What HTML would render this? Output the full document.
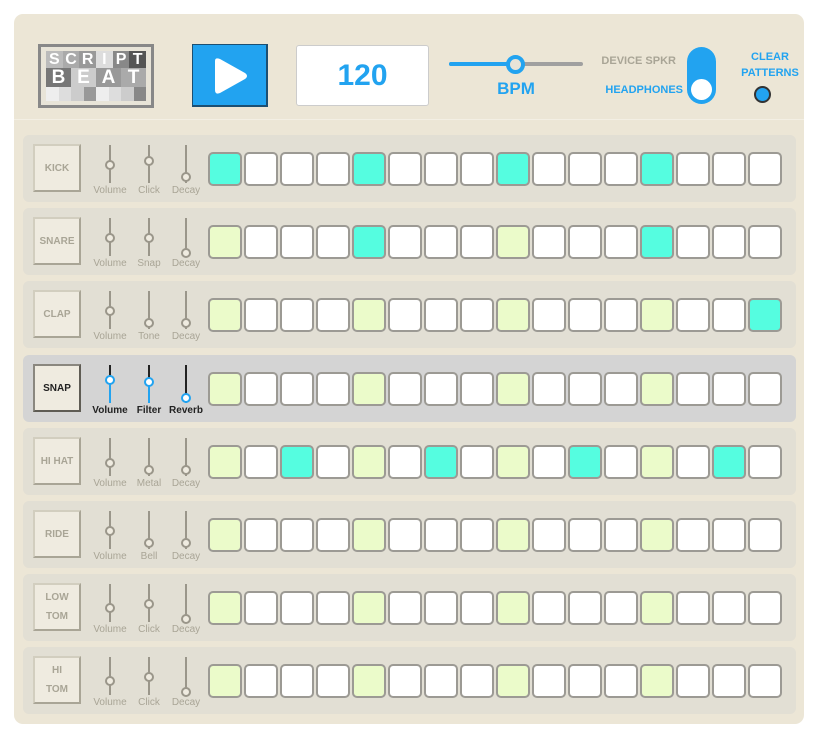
<!DOCTYPE html>
<html><head><meta charset="utf-8"><style>
*{box-sizing:border-box;margin:0;padding:0}
body{width:821px;height:734px;background:#fff;font-family:"Liberation Sans",sans-serif;position:relative;overflow:hidden}
.panel{position:absolute;left:14px;top:14px;width:790px;height:710px;background:#ece6d6;border-radius:9px}
.sep{position:absolute;left:14px;top:119px;width:790px;height:1px;background:#f3efe4}
.row{position:absolute;left:23px;width:773px;height:67px;background:#e2dfd4;border-radius:6px}
.row.act{background:#d4d4d4}
.btn{position:absolute;left:10px;top:9px;width:48px;height:48px;background:#efebe0;border:2px solid #d2cebf;border-right-color:#a9a596;border-bottom-color:#a9a596;color:#a9a596;font-weight:bold;font-size:10px;display:flex;align-items:center;justify-content:center;text-align:center;line-height:19px}
.act .btn{border:2px solid #5f5c54;border-top-color:#8a877f;border-left-color:#8a877f;color:#222}
.sl{position:absolute;top:10px;width:2px;height:38px;background:#9a968a}
.kn{position:absolute;left:-4px;width:10px;height:10px;border-radius:50%;border:2px solid #9a968a;background:#efebe0}
.act .sl{background:#222}
.act .kn{border-color:#22a3f0;background:#fff}
.act .fill{position:absolute;left:0;width:2px;background:#22a3f0;bottom:0}
.lb{position:absolute;top:40px;width:50px;margin-left:-24px;text-align:center;font-size:10px;color:#a9a596}
.act .lb{color:#222;font-weight:bold}
.pad{position:absolute;top:17px;width:34px;height:34px;background:#fff;border:2px solid #9c9a94;border-radius:5px}
.g{background:#ebfbca}.t{background:#55fde0}
</style></head><body>
<div class="panel"></div><div class="sep"></div>

<div style="position:absolute;left:38px;top:44px;width:116px;height:64px;background:#888;padding:3px">
<div style="width:110px;height:58px;background:#e8e4d8;padding:4px 5px;position:relative">
<div style="display:flex;height:17px;font-weight:bold;font-size:16px;color:#fff;line-height:17px;text-align:center">
<div style="flex:1;background:#bbb">S</div><div style="flex:1;background:#aaa">C</div><div style="flex:1;background:#999">R</div><div style="flex:1;background:#ddd">I</div><div style="flex:1;background:#888">P</div><div style="flex:1;background:#555">T</div></div>
<div style="display:flex;height:19px;font-weight:bold;font-size:19px;color:#fff;line-height:19px;text-align:center">
<div style="flex:1;background:#777">B</div><div style="flex:1;background:#ccc">E</div><div style="flex:1;background:#999">A</div><div style="flex:1;background:#aaa">T</div></div>
<div style="display:flex;height:14px"><div style="flex:1;background:#eee"></div><div style="flex:1;background:#ddd"></div><div style="flex:1;background:#ccc"></div><div style="flex:1;background:#999"></div><div style="flex:1;background:#eee"></div><div style="flex:1;background:#ddd"></div><div style="flex:1;background:#ccc"></div><div style="flex:1;background:#888"></div></div>
</div></div>

<div style="position:absolute;left:192px;top:44px;width:76px;height:63px;background:#22a3f0;border:1px solid #1c4f72;border-bottom-width:2px;border-right-width:2px">
<svg width="76" height="63" style="position:absolute;left:0;top:0"><path d="M22 16 L22 45 Q22 50 27 48 L52 34 Q56 31 52 28 L27 14 Q22 12 22 16Z" fill="#fff"/></svg></div>

<div style="position:absolute;left:296px;top:45px;width:133px;height:61px;background:#fff;border:1px solid #ccc;border-radius:3px;text-align:center;line-height:59px;font-size:30px;font-weight:bold;color:#22a3f0">120</div>

<div style="position:absolute;left:449px;top:62px;width:134px;height:4px;background:#a0a0a0;border-radius:2px"></div>
<div style="position:absolute;left:449px;top:62px;width:66px;height:4px;background:#22a3f0;border-radius:2px"></div>
<div style="position:absolute;left:506px;top:55px;width:19px;height:19px;border-radius:50%;border:4px solid #22a3f0;background:#e8e4d8"></div>
<div style="position:absolute;left:476px;top:79px;width:80px;text-align:center;font-size:17px;font-weight:bold;color:#22a3f0">BPM</div>

<div style="position:absolute;right:145px;top:55px;font-size:11px;font-weight:bold;color:#a9a596">DEVICE SPKR</div>
<div style="position:absolute;right:138px;top:84px;font-size:11px;font-weight:bold;color:#22a3f0">HEADPHONES</div>
<div style="position:absolute;left:687px;top:47px;width:29px;height:57px;border-radius:15px;background:#22a3f0"></div>
<div style="position:absolute;left:691px;top:79px;width:21px;height:21px;border-radius:50%;background:#fff"></div>
<div style="position:absolute;left:725px;top:49px;width:90px;text-align:center;font-size:11px;font-weight:bold;color:#22a3f0;line-height:16px">CLEAR<br>PATTERNS</div>
<div style="position:absolute;left:754px;top:86px;width:17px;height:17px;border-radius:50%;background:#22a3f0;border:2px solid #333"></div>

<div class="row" style="top:135px"><div class="btn">KICK</div>
<div class="sl" style="left:86px"><div class="kn" style="top:15px"></div><div class="lb" style="left:0">Volume</div></div>
<div class="sl" style="left:125px"><div class="kn" style="top:11px"></div><div class="lb">Click</div></div>
<div class="sl" style="left:162px"><div class="kn" style="top:27px"></div><div class="lb">Decay</div></div>
<div class="pad t" style="left:185px"></div><div class="pad" style="left:221px"></div><div class="pad" style="left:257px"></div><div class="pad" style="left:293px"></div><div class="pad t" style="left:329px"></div><div class="pad" style="left:365px"></div><div class="pad" style="left:401px"></div><div class="pad" style="left:437px"></div><div class="pad t" style="left:473px"></div><div class="pad" style="left:509px"></div><div class="pad" style="left:545px"></div><div class="pad" style="left:581px"></div><div class="pad t" style="left:617px"></div><div class="pad" style="left:653px"></div><div class="pad" style="left:689px"></div><div class="pad" style="left:725px"></div></div>

<div class="row" style="top:208px"><div class="btn">SNARE</div>
<div class="sl" style="left:86px"><div class="kn" style="top:15px"></div><div class="lb">Volume</div></div>
<div class="sl" style="left:125px"><div class="kn" style="top:15px"></div><div class="lb">Snap</div></div>
<div class="sl" style="left:162px"><div class="kn" style="top:30px"></div><div class="lb">Decay</div></div>
<div class="pad g" style="left:185px"></div><div class="pad" style="left:221px"></div><div class="pad" style="left:257px"></div><div class="pad" style="left:293px"></div><div class="pad t" style="left:329px"></div><div class="pad" style="left:365px"></div><div class="pad" style="left:401px"></div><div class="pad" style="left:437px"></div><div class="pad g" style="left:473px"></div><div class="pad" style="left:509px"></div><div class="pad" style="left:545px"></div><div class="pad" style="left:581px"></div><div class="pad t" style="left:617px"></div><div class="pad" style="left:653px"></div><div class="pad" style="left:689px"></div><div class="pad" style="left:725px"></div></div>

<div class="row" style="top:281px"><div class="btn">CLAP</div>
<div class="sl" style="left:86px"><div class="kn" style="top:15px"></div><div class="lb">Volume</div></div>
<div class="sl" style="left:125px"><div class="kn" style="top:27px"></div><div class="lb">Tone</div></div>
<div class="sl" style="left:162px"><div class="kn" style="top:27px"></div><div class="lb">Decay</div></div>
<div class="pad g" style="left:185px"></div><div class="pad" style="left:221px"></div><div class="pad" style="left:257px"></div><div class="pad" style="left:293px"></div><div class="pad g" style="left:329px"></div><div class="pad" style="left:365px"></div><div class="pad" style="left:401px"></div><div class="pad" style="left:437px"></div><div class="pad g" style="left:473px"></div><div class="pad" style="left:509px"></div><div class="pad" style="left:545px"></div><div class="pad" style="left:581px"></div><div class="pad g" style="left:617px"></div><div class="pad" style="left:653px"></div><div class="pad" style="left:689px"></div><div class="pad t" style="left:725px"></div></div>

<div class="row act" style="top:355px"><div class="btn">SNAP</div>
<div class="sl" style="left:86px"><div class="fill" style="height:24px"></div><div class="kn" style="top:10px"></div><div class="lb">Volume</div></div>
<div class="sl" style="left:125px"><div class="fill" style="height:22px"></div><div class="kn" style="top:12px"></div><div class="lb">Filter</div></div>
<div class="sl" style="left:162px"><div class="fill" style="height:6px"></div><div class="kn" style="top:28px"></div><div class="lb">Reverb</div></div>
<div class="pad g" style="left:185px"></div><div class="pad" style="left:221px"></div><div class="pad" style="left:257px"></div><div class="pad" style="left:293px"></div><div class="pad g" style="left:329px"></div><div class="pad" style="left:365px"></div><div class="pad" style="left:401px"></div><div class="pad" style="left:437px"></div><div class="pad g" style="left:473px"></div><div class="pad" style="left:509px"></div><div class="pad" style="left:545px"></div><div class="pad" style="left:581px"></div><div class="pad g" style="left:617px"></div><div class="pad" style="left:653px"></div><div class="pad" style="left:689px"></div><div class="pad" style="left:725px"></div></div>

<div class="row" style="top:428px"><div class="btn">HI HAT</div>
<div class="sl" style="left:86px"><div class="kn" style="top:20px"></div><div class="lb">Volume</div></div>
<div class="sl" style="left:125px"><div class="kn" style="top:27px"></div><div class="lb">Metal</div></div>
<div class="sl" style="left:162px"><div class="kn" style="top:27px"></div><div class="lb">Decay</div></div>
<div class="pad g" style="left:185px"></div><div class="pad" style="left:221px"></div><div class="pad t" style="left:257px"></div><div class="pad" style="left:293px"></div><div class="pad g" style="left:329px"></div><div class="pad" style="left:365px"></div><div class="pad t" style="left:401px"></div><div class="pad" style="left:437px"></div><div class="pad g" style="left:473px"></div><div class="pad" style="left:509px"></div><div class="pad t" style="left:545px"></div><div class="pad" style="left:581px"></div><div class="pad g" style="left:617px"></div><div class="pad" style="left:653px"></div><div class="pad t" style="left:689px"></div><div class="pad" style="left:725px"></div></div>

<div class="row" style="top:501px"><div class="btn">RIDE</div>
<div class="sl" style="left:86px"><div class="kn" style="top:15px"></div><div class="lb">Volume</div></div>
<div class="sl" style="left:125px"><div class="kn" style="top:27px"></div><div class="lb">Bell</div></div>
<div class="sl" style="left:162px"><div class="kn" style="top:27px"></div><div class="lb">Decay</div></div>
<div class="pad g" style="left:185px"></div><div class="pad" style="left:221px"></div><div class="pad" style="left:257px"></div><div class="pad" style="left:293px"></div><div class="pad g" style="left:329px"></div><div class="pad" style="left:365px"></div><div class="pad" style="left:401px"></div><div class="pad" style="left:437px"></div><div class="pad g" style="left:473px"></div><div class="pad" style="left:509px"></div><div class="pad" style="left:545px"></div><div class="pad" style="left:581px"></div><div class="pad g" style="left:617px"></div><div class="pad" style="left:653px"></div><div class="pad" style="left:689px"></div><div class="pad" style="left:725px"></div></div>

<div class="row" style="top:574px"><div class="btn">LOW<br>TOM</div>
<div class="sl" style="left:86px"><div class="kn" style="top:19px"></div><div class="lb">Volume</div></div>
<div class="sl" style="left:125px"><div class="kn" style="top:15px"></div><div class="lb">Click</div></div>
<div class="sl" style="left:162px"><div class="kn" style="top:30px"></div><div class="lb">Decay</div></div>
<div class="pad g" style="left:185px"></div><div class="pad" style="left:221px"></div><div class="pad" style="left:257px"></div><div class="pad" style="left:293px"></div><div class="pad g" style="left:329px"></div><div class="pad" style="left:365px"></div><div class="pad" style="left:401px"></div><div class="pad" style="left:437px"></div><div class="pad g" style="left:473px"></div><div class="pad" style="left:509px"></div><div class="pad" style="left:545px"></div><div class="pad" style="left:581px"></div><div class="pad g" style="left:617px"></div><div class="pad" style="left:653px"></div><div class="pad" style="left:689px"></div><div class="pad" style="left:725px"></div></div>

<div class="row" style="top:647px"><div class="btn">HI<br>TOM</div>
<div class="sl" style="left:86px"><div class="kn" style="top:19px"></div><div class="lb">Volume</div></div>
<div class="sl" style="left:125px"><div class="kn" style="top:15px"></div><div class="lb">Click</div></div>
<div class="sl" style="left:162px"><div class="kn" style="top:30px"></div><div class="lb">Decay</div></div>
<div class="pad g" style="left:185px"></div><div class="pad" style="left:221px"></div><div class="pad" style="left:257px"></div><div class="pad" style="left:293px"></div><div class="pad g" style="left:329px"></div><div class="pad" style="left:365px"></div><div class="pad" style="left:401px"></div><div class="pad" style="left:437px"></div><div class="pad g" style="left:473px"></div><div class="pad" style="left:509px"></div><div class="pad" style="left:545px"></div><div class="pad" style="left:581px"></div><div class="pad g" style="left:617px"></div><div class="pad" style="left:653px"></div><div class="pad" style="left:689px"></div><div class="pad" style="left:725px"></div></div>
</body></html>
